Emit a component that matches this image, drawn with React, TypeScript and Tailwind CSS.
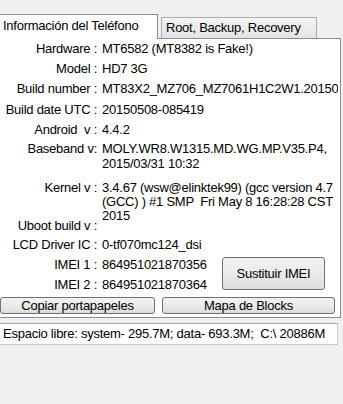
import React from "react";

type Row = { label: string; lines: string[]; h: string };

const rows: Row[] = [
  { label: "Hardware :", lines: ["MT6582 (MT8382 is Fake!)"], h: "h-[19px] leading-[19px]" },
  { label: "Model :", lines: ["HD7 3G"], h: "h-[21px] leading-[21px]" },
  { label: "Build number :", lines: ["MT83X2_MZ706_MZ7061H1C2W1.20150508"], h: "h-[20px] leading-[20px]" },
  { label: "Build date UTC :", lines: ["20150508-085419"], h: "h-[21px] leading-[21px]" },
  { label: "Android  v :", lines: ["4.4.2"], h: "h-[19px] leading-[19px]" },
];

function Btn({ children, cls }: { children: React.ReactNode; cls: string }) {
  return (
    <div
      className={
        "flex items-center justify-center rounded-[3px] border border-[#707070] bg-gradient-to-b from-[#f2f2f2] via-[#ebebeb] to-[#dcdcdc] text-black " +
        cls
      }
    >
      {children}
    </div>
  );
}

export default function App() {
  return (
    <div className="w-[343px] h-[404px] overflow-hidden bg-[#f0f0f0] font-['Liberation_Sans',Arial,sans-serif] text-[13px] tracking-[-0.25px] text-black">
      {/* tab strip */}
      <div className="flex items-end h-[38px] -ml-[2px] relative z-10">
        <div className="h-[25px] w-[160px] bg-white border border-b-0 border-[#898c95] -mb-px pl-[4px] leading-[22px] whitespace-nowrap">
          Información del Teléfono
        </div>
        <div className="ml-[3px] h-[21px] w-[156px] border border-b-0 border-[#acacac] bg-gradient-to-b from-[#f4f4f4] to-[#e3e3e3] pl-[4px] leading-[20px] whitespace-nowrap">
          Root, Backup, Recovery
        </div>
      </div>
      {/* panel */}
      <div className="-ml-[2px] w-[343px] h-[280px] border border-[#898c95] bg-white flex flex-col">
        {rows.map((r) => (
          <div key={r.label} className={"flex " + r.h}>
            <div className="w-[98px] shrink-0 text-right whitespace-pre">{r.label}</div>
            <div className="ml-[5px] w-[236px] overflow-hidden whitespace-nowrap">{r.lines[0]}</div>
          </div>
        ))}
        <div className="flex h-[41px]">
          <div className="w-[98px] shrink-0 text-right whitespace-pre pt-[2px] leading-[15px]">Baseband v:</div>
          <div className="ml-[5px] w-[236px] overflow-hidden whitespace-nowrap pt-[2px] leading-[15px]">
            <div>MOLY.WR8.W1315.MD.WG.MP.V35.P4,</div>
            <div>2015/03/31 10:32</div>
          </div>
        </div>
        <div className="flex h-[37px] relative">
          <div className="w-[98px] shrink-0 text-right whitespace-pre pt-[1px] leading-[14px]">Kernel v :</div>
          <div className="ml-[5px] w-[236px] h-[45px] overflow-hidden whitespace-pre pt-[1px] leading-[14px]">
            <div>3.4.67 (wsw@elinktek99) (gcc version 4.7</div>
            <div>(GCC) ) #1 SMP  Fri May 8 16:28:28 CST</div>
            <div>2015</div>
          </div>
        </div>
        <div className="flex h-[18px] leading-[18px]">
          <div className="w-[98px] shrink-0 text-right whitespace-pre">Uboot build v :</div>
        </div>
        <div className="flex h-[20px] leading-[20px]">
          <div className="w-[98px] shrink-0 text-right whitespace-pre">LCD Driver IC :</div>
          <div className="ml-[5px] w-[236px] overflow-hidden whitespace-nowrap">0-tf070mc124_dsi</div>
        </div>
        <div className="flex h-[40px]">
          <div className="flex flex-col">
            <div className="flex h-[20px] leading-[20px]">
              <div className="w-[98px] shrink-0 text-right whitespace-pre">IMEI 1 :</div>
              <div className="ml-[5px] whitespace-nowrap">864951021870356</div>
            </div>
            <div className="flex h-[20px] leading-[20px]">
              <div className="w-[98px] shrink-0 text-right whitespace-pre">IMEI 2 :</div>
              <div className="ml-[5px] whitespace-nowrap">864951021870364</div>
            </div>
          </div>
          <div className="ml-auto mr-[15px] mt-[2px]">
            <Btn cls="w-[103px] h-[33px]">Sustituir IMEI</Btn>
          </div>
        </div>
        <div className="flex mt-[2px] ml-[1px] gap-[7px]">
          <Btn cls="w-[155px] h-[17px] leading-[15px]">Copiar portapapeles</Btn>
          <Btn cls="w-[173px] h-[17px] leading-[15px]">Mapa de Blocks</Btn>
        </div>
      </div>
      {/* status box */}
      <div className="mt-[5px] -ml-[2px] w-[340px] h-[22px] border border-[#c9c9c9] border-t-[#a8a8a8] bg-white pl-[4px] leading-[20px] whitespace-pre overflow-hidden">
        Espacio libre: system- 295.7M; data- 693.3M;  C:\ 20886M
      </div>
    </div>
  );
}
